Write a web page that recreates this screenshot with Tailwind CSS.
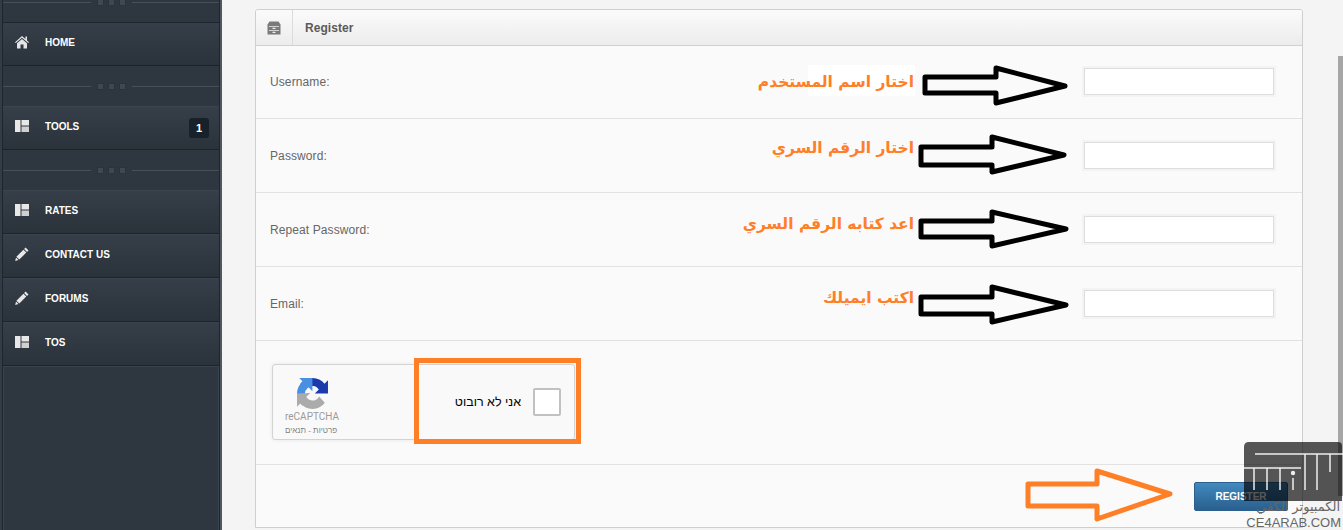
<!DOCTYPE html>
<html lang="en">
<head>
<meta charset="utf-8">
<title>Register</title>
<script src="https://cdn.jsdelivr.net/npm/@tailwindcss/browser@4"></script>
</head>
<body class="m-0">
<div class="relative flex h-[530px] w-[1343px] overflow-hidden bg-[#f4f4f4] font-['Liberation_Sans',Arial,sans-serif]">

  <!-- Sidebar -->
  <aside class="flex h-full w-[222px] shrink-0 flex-col border-r-2 border-r-[#4f5860] border-l-[2px] border-l-[#333c45] bg-[#2e3740]">
    <div class="flex h-full flex-col border-x border-x-[#1e262d]">
      <div class="-mt-[18px] flex h-10 shrink-0 items-center">
        <span class="h-px flex-1 bg-[#465059]"></span>
        <span class="mx-1.5 flex gap-1"><i class="size-[7px] border border-[#2a323a] bg-[#3d4853]"></i><i class="size-[7px] border border-[#2a323a] bg-[#3d4853]"></i><i class="size-[7px] border border-[#2a323a] bg-[#3d4853]"></i></span>
        <span class="h-px flex-1 bg-[#465059]"></span>
      </div>

      <a class="flex h-11 shrink-0 items-center border-y border-t-[#1e262d] border-b-[#1c242b] bg-gradient-to-b from-[#363f49] to-[#2a323a] pr-2.5 pb-[4px] pl-3 text-[10px] font-bold text-white">
        <svg class="mr-4 size-[14px]" viewBox="0 0 14 14" fill="#e4e4e4"><path d="M7 1 0 7.2l.8.8L7 2.7 13.2 8l.8-.8-2-1.8V1.6h-1.6v2.4z"/><path d="M2 8.3 7 4l5 4.3V13.500H8.500V9.500h-3V13.500H2z"/></svg>
        HOME
      </a>

      <div class="flex h-10 shrink-0 items-center">
        <span class="h-px flex-1 bg-[#465059]"></span>
        <span class="mx-1.5 flex gap-1"><i class="size-[7px] border border-[#2a323a] bg-[#3d4853]"></i><i class="size-[7px] border border-[#2a323a] bg-[#3d4853]"></i><i class="size-[7px] border border-[#2a323a] bg-[#3d4853]"></i></span>
        <span class="h-px flex-1 bg-[#465059]"></span>
      </div>

      <a class="flex h-11 shrink-0 items-center border-y border-t-[#3a444e] border-b-[#1c242b] bg-gradient-to-b from-[#363f49] to-[#2a323a] pr-2.5 pb-[4px] pl-3 text-[10px] font-bold text-white">
        <svg class="mr-4 size-[14px]" viewBox="0 0 14 14" fill="#e8e8e8"><path d="M0 1h5.500v12H0z"/><path d="M6.500 1H14v5.500H6.500z"/><path d="M6.500 7.500H14V13H6.500z" fill="#d0d0d0"/></svg>
        TOOLS
        <span class="mt-[4px] ml-auto flex h-5 w-5 items-center justify-center rounded-[3px] bg-[#17212a] text-[11px]">1</span>
      </a>

      <div class="flex h-10 shrink-0 items-center">
        <span class="h-px flex-1 bg-[#465059]"></span>
        <span class="mx-1.5 flex gap-1"><i class="size-[7px] border border-[#2a323a] bg-[#3d4853]"></i><i class="size-[7px] border border-[#2a323a] bg-[#3d4853]"></i><i class="size-[7px] border border-[#2a323a] bg-[#3d4853]"></i></span>
        <span class="h-px flex-1 bg-[#465059]"></span>
      </div>

      <a class="flex h-11 shrink-0 items-center border-y border-t-[#3a444e] border-b-[#1c242b] bg-gradient-to-b from-[#363f49] to-[#2a323a] pr-2.5 pb-[4px] pl-3 text-[10px] font-bold text-white">
        <svg class="mr-4 size-[14px]" viewBox="0 0 14 14" fill="#e8e8e8"><path d="M0 1h5.500v12H0z"/><path d="M6.500 1H14v5.500H6.500z"/><path d="M6.500 7.500H14V13H6.500z" fill="#d0d0d0"/></svg>
        RATES
      </a>
      <a class="flex h-11 shrink-0 items-center border-y border-t-[#3a444e] border-b-[#1c242b] bg-gradient-to-b from-[#363f49] to-[#2a323a] pr-2.5 pb-[4px] pl-3 text-[10px] font-bold text-white">
        <svg class="mr-4 size-[14px]" viewBox="0 0 14 14" fill="#e8e8e8"><path d="M10.600 0.500 13.500 3.400 12 4.900 9.100 2zM8.400 2.700 11.300 5.600 4.300 12.600 1.400 9.700zM1 10.500 3.500 13 .2 13.900z"/></svg>
        CONTACT US
      </a>
      <a class="flex h-11 shrink-0 items-center border-y border-t-[#3a444e] border-b-[#1c242b] bg-gradient-to-b from-[#363f49] to-[#2a323a] pr-2.5 pb-[4px] pl-3 text-[10px] font-bold text-white">
        <svg class="mr-4 size-[14px]" viewBox="0 0 14 14" fill="#e8e8e8"><path d="M10.600 0.500 13.500 3.400 12 4.900 9.100 2zM8.400 2.700 11.300 5.600 4.300 12.600 1.400 9.700zM1 10.500 3.500 13 .2 13.900z"/></svg>
        FORUMS
      </a>
      <a class="flex h-11 shrink-0 items-center border-y border-t-[#3a444e] border-b-[#1c242b] bg-gradient-to-b from-[#363f49] to-[#2a323a] pr-2.5 pb-[4px] pl-3 text-[10px] font-bold text-white">
        <svg class="mr-4 size-[14px]" viewBox="0 0 14 14" fill="#e8e8e8"><path d="M0 1h5.500v12H0z"/><path d="M6.500 1H14v5.500H6.500z"/><path d="M6.500 7.500H14V13H6.500z" fill="#d0d0d0"/></svg>
        TOS
      </a>
      <div class="flex-1 border-x border-t border-[#39434d]"></div>
    </div>
  </aside>

  <!-- Main panel -->
  <main class="mt-[9px] ml-[33px] h-[519px] w-[1048px] shrink-0 overflow-hidden rounded-t-[3px] border border-[#cfcfcf] bg-[#fafafa]">
    <header class="flex h-[36px] border-b border-[#d0d0d0] bg-gradient-to-b from-[#fbfbfb] to-[#ececec]">
      <div class="flex w-[37px] items-center justify-center border-r border-[#dcdcdc]">
        <svg class="size-[14px]" viewBox="0 0 14 14" fill="#7a7a7a"><path d="M2.500 0.500h9L13.500 3.500V13.500H.5V3.500z"/><path d="M2 5h10v.8H2zM2 9h10v.8H2z" fill="#eeeeee"/><path d="M5.500 6.800h3v1.200h-3zM5.500 10.800h3V12h-3z" fill="#eeeeee"/></svg>
      </div>
      <h1 class="flex items-center pl-3 text-xs font-bold tracking-[0.05px] text-[#5a5a5a]">Register</h1>
    </header>

    <div class="relative flex h-[73px] items-center justify-between border-b border-[#e2e2e2] pr-[28px] pl-[14px] text-xs tracking-[0.1px] text-[#666666]">
      <label>Username:</label>
      <input type="text" aria-label="Username" class="mt-[-1px] h-[27px] w-[190px] border border-[#dddddd] bg-white shadow-[0_0_0_2px_#f3f3f3]">
      <span class="absolute top-[19px] left-[552px] h-[31px] w-[107px] bg-white"></span>
      <span dir="rtl" class="absolute top-[20px] right-[388px] font-['DejaVu_Sans',sans-serif] text-[15.5px] leading-[32px] font-bold tracking-normal text-[#ff7f27]">اختار اسم المستخدم</span>
      <svg class="absolute top-[16px] left-[664px]" width="152" height="44" viewBox="0 0 152 44" fill="none" stroke="#000" stroke-width="5" stroke-linejoin="round"><path d="M5 15H76V6L145 24 76 41V31H5z"/></svg>
    </div>
    <div class="relative flex h-[74px] items-center justify-between border-b border-[#e2e2e2] pr-[28px] pl-[14px] text-xs tracking-[0.1px] text-[#666666]">
      <label class="mt-[1px]">Password:</label>
      <input type="password" aria-label="Password" class="h-[27px] w-[190px] border border-[#dddddd] bg-white shadow-[0_0_0_2px_#f3f3f3]">
      <span dir="rtl" class="absolute top-[13px] right-[388px] font-['DejaVu_Sans',sans-serif] text-[15.5px] leading-[32px] font-bold tracking-normal text-[#ff7f27]">اختار الرقم السري</span>
      <svg class="absolute top-[13px] left-[660px]" width="156" height="46" viewBox="0 0 156 46" fill="none" stroke="#000" stroke-width="5" stroke-linejoin="round"><path d="M5 15H76V5L148 23 76 40V33H5z"/></svg>
    </div>
    <div class="relative flex h-[74px] items-center justify-between border-b border-[#e2e2e2] pr-[28px] pl-[14px] text-xs tracking-[0.1px] text-[#666666]">
      <label class="mt-[1px]">Repeat Password:</label>
      <input type="password" aria-label="Repeat Password" class="h-[27px] w-[190px] border border-[#dddddd] bg-white shadow-[0_0_0_2px_#f3f3f3]">
      <span dir="rtl" class="absolute top-[15px] right-[388px] font-['DejaVu_Sans',sans-serif] text-[15.5px] leading-[32px] font-bold tracking-normal text-[#ff7f27]">اعد كتابه الرقم السري</span>
      <svg class="absolute top-[13px] left-[660px]" width="156" height="44" viewBox="0 0 156 44" fill="none" stroke="#000" stroke-width="5" stroke-linejoin="round"><path d="M5 15H76V6L150 23 76 40V31H5z"/></svg>
    </div>
    <div class="relative flex h-[74px] items-center justify-between border-b border-[#e2e2e2] pr-[28px] pl-[14px] text-xs tracking-[0.1px] text-[#666666]">
      <label class="mt-[1px]">Email:</label>
      <input type="email" aria-label="Email" class="h-[27px] w-[190px] border border-[#dddddd] bg-white shadow-[0_0_0_2px_#f3f3f3]">
      <span dir="rtl" class="absolute top-[15px] right-[388px] font-['DejaVu_Sans',sans-serif] text-[15.5px] leading-[32px] font-bold tracking-normal text-[#ff7f27]">اكتب ايميلك</span>
      <svg class="absolute top-[15px] left-[660px]" width="156" height="44" viewBox="0 0 156 44" fill="none" stroke="#000" stroke-width="5" stroke-linejoin="round"><path d="M5 15H76V5L150 23 76 40V32H5z"/></svg>
    </div>

    <!-- Captcha row -->
    <div class="relative h-[124px] border-b border-[#e2e2e2] pt-[23px] pl-4">
      <div class="flex h-[76px] w-[303px] items-center justify-between rounded-[3px] border border-[#d3d3d3] bg-[#f9f9f9] pr-[13px] pl-3 shadow-[0_0_4px_rgba(0,0,0,0.08)]">
        <div class="mt-[9px] flex w-[60px] flex-col items-start">
          <svg class="mb-[2px] ml-[12px] size-[31px]" viewBox="0 0 64 64"><path d="M64 31.955l-.033-1.37V4.687l-7.16 7.16C50.948 4.674 42.033.093 32.05.093c-10.4 0-19.622 4.96-25.458 12.64l11.736 11.86a15.55 15.55 0 0 1 4.754-5.334c2.05-1.6 4.952-2.906 8.968-2.906.485 0 .86.057 1.135.163 4.976.393 9.288 3.14 11.828 7.124l-8.307 8.307 32.294.008" fill="#1c3aa9"/><path d="M31.862 0l-1.37.033H4.594l7.16 7.16C4.58 13.05 0 21.967 0 31.95c0 10.4 4.96 19.622 12.64 25.458l11.86-11.736a15.55 15.55 0 0 1-5.334-4.754c-1.6-2.05-2.906-4.952-2.906-8.968 0-.485.057-.86.163-1.135.393-4.976 3.14-9.288 7.124-11.828l8.307 8.307L31.862 0" fill="#4a90e2"/><path d="M.001 31.955l.033 1.37v25.9l7.16-7.16c5.86 7.173 14.776 11.754 24.76 11.754 10.4 0 19.622-4.96 25.458-12.64L45.676 38.32a15.55 15.55 0 0 1-4.754 5.334c-2.05 1.6-4.952 2.906-8.968 2.906-.485 0-.86-.057-1.135-.163-4.976-.393-9.288-3.14-11.828-7.124l8.307-8.307L.004 31.955" fill="#ababab"/></svg>
          <span class="font-['Roboto',sans-serif] text-[10px] leading-3 text-[#9b9b9b]">reCAPTCHA</span>
          <span dir="rtl" class="mt-[3px] font-['Liberation_Sans',sans-serif] text-[8px] leading-[10px] text-[#808080]">פרטיות - תנאים</span>
        </div>
        <div class="flex items-center gap-3">
          <span dir="rtl" class="order-1 text-[12.5px] text-black">אני לא רובוט</span>
          <span class="order-2 size-7 rounded-[2px] border-2 border-[#c1c1c1] bg-white"></span>
        </div>
      </div>
      <span class="absolute top-[17px] left-[158px] h-[86px] w-[167px] border-[5px] border-[#ff7f27]"></span>
    </div>

    <!-- Footer -->
    <div class="relative flex h-[62px] items-start justify-end pt-[17px] pr-[14px]">
      <button class="h-[29px] w-[94px] rounded-[2px] border border-[#2a5f8e] bg-gradient-to-b from-[#418abf] to-[#2a5f8e] text-[10px] font-bold text-white">REGISTER</button>
      <svg class="absolute top-[2px] left-[769px]" width="150" height="58" viewBox="0 0 150 58" fill="none" stroke="#ff7f27" stroke-width="5" stroke-linejoin="round"><path d="M3 17H72V4L145 27 72 52V39H3z"/></svg>
    </div>
  </main>

  <!-- Scrollbar thumb -->
  <div class="absolute top-[56px] right-0 h-[440px] w-[5px] bg-[#a6a6a6]"></div>

  <!-- Watermark -->
  <div class="pointer-events-none absolute top-[442px] left-[1244px] h-[88px] w-[99px]">
    <svg class="block" width="99" height="59" viewBox="0 0 99 59">
      <path d="M5 0H94Q98 0 98 4V59H0V5Q0 0 5 0z" fill="#000" fill-opacity="0.66"/>
      <g stroke="#fff" stroke-opacity="0.9" stroke-width="1.500" fill="none">
        <path d="M11 12H99M0 26H57M10 26V48M23 26V48M36 26V48M49 36V48M61 12V48M73 12V48M86 12V30"/>
      </g>
      <circle cx="49" cy="31" r="2.200" fill="#fff" fill-opacity="0.9"/>
    </svg>
    <div dir="rtl" class="absolute top-[57px] right-[3px] font-['DejaVu_Sans',sans-serif] text-[13px] leading-[16px] whitespace-nowrap text-[#666666]">الكمبيوتر الكفي</div>
    <div class="absolute top-[74px] right-[2px] font-['Liberation_Sans',sans-serif] text-[13px] leading-[14px] text-[#666666]">CE4ARAB.COM</div>
  </div>
</div>
</body>
</html>
